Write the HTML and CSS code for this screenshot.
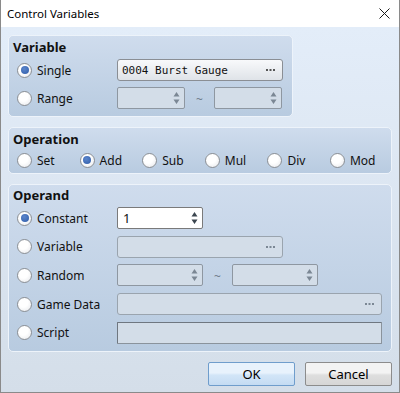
FILE: index.html
```html
<!DOCTYPE html>
<html lang="en">
<head>
  <meta charset="UTF-8">
  <title>Control Variables</title>
  <link rel="stylesheet" href="styles.css">
</head>
<body>
  <div class="window">
    <div class="titlebar">
      <span class="title">Control Variables</span>
      <svg class="close" width="11" height="11" viewBox="0 0 11 11"><path d="M0.5 0.5L10.5 10.5M10.5 0.5L0.5 10.5" stroke="#1a1a1a" stroke-width="1"/></svg>
    </div>

    <div class="content">
      <div class="group group-variable">
        <div class="group-title">Variable</div>
        <div class="rows">
          <label class="radio checked"><span class="dot"></span>Single</label>
          <div class="combo"><span class="mono">0004 Burst Gauge</span><svg class="more" width="9" height="2" viewBox="0 0 9 2"><path d="M0 0h2v2H0zM3.5 0h2v2h-2zM7 0h2v2H7z" fill="#555"/></svg></div>

          <label class="radio"><span class="dot"></span>Range</label>
          <div class="pair pair-range">
            <div class="spin disabled"><span class="arrows"><svg width="7" height="14" viewBox="0 0 7 14"><path d="M3.5 1L6.5 5.5H0.5Z M0.5 8.5H6.5L3.5 13Z" fill="#7b8794"/></svg></span></div>
            <span class="tilde">~</span>
            <div class="spin disabled"><span class="arrows"><svg width="7" height="14" viewBox="0 0 7 14"><path d="M3.5 1L6.5 5.5H0.5Z M0.5 8.5H6.5L3.5 13Z" fill="#7b8794"/></svg></span></div>
          </div>
        </div>
      </div>

      <div class="group group-operation">
        <div class="group-title">Operation</div>
        <div class="ops">
          <label class="radio"><span class="dot"></span>Set</label>
          <label class="radio checked"><span class="dot"></span>Add</label>
          <label class="radio"><span class="dot"></span>Sub</label>
          <label class="radio"><span class="dot"></span>Mul</label>
          <label class="radio"><span class="dot"></span>Div</label>
          <label class="radio"><span class="dot"></span>Mod</label>
        </div>
      </div>

      <div class="group group-operand">
        <div class="group-title">Operand</div>
        <div class="rows rows-operand">
          <label class="radio checked"><span class="dot"></span>Constant</label>
          <div class="spin active"><span class="value">1</span><span class="arrows"><svg width="7" height="14" viewBox="0 0 7 14"><path d="M3.5 1L6.5 5.5H0.5Z M0.5 8.5H6.5L3.5 13Z" fill="#3c4650"/></svg></span></div>

          <label class="radio"><span class="dot"></span>Variable</label>
          <div class="field short"><svg class="more" width="9" height="2" viewBox="0 0 9 2"><path d="M0 0h2v2H0zM3.5 0h2v2h-2zM7 0h2v2H7z" fill="#7b8794"/></svg></div>

          <label class="radio"><span class="dot"></span>Random</label>
          <div class="pair pair-random">
            <div class="spin disabled"><span class="arrows"><svg width="7" height="14" viewBox="0 0 7 14"><path d="M3.5 1L6.5 5.5H0.5Z M0.5 8.5H6.5L3.5 13Z" fill="#7b8794"/></svg></span></div>
            <span class="tilde">~</span>
            <div class="spin disabled"><span class="arrows"><svg width="7" height="14" viewBox="0 0 7 14"><path d="M3.5 1L6.5 5.5H0.5Z M0.5 8.5H6.5L3.5 13Z" fill="#7b8794"/></svg></span></div>
          </div>

          <label class="radio"><span class="dot"></span>Game Data</label>
          <div class="field wide"><svg class="more" width="9" height="2" viewBox="0 0 9 2"><path d="M0 0h2v2H0zM3.5 0h2v2h-2zM7 0h2v2H7z" fill="#7b8794"/></svg></div>

          <label class="radio"><span class="dot"></span>Script</label>
          <div class="field wide script"></div>
        </div>
      </div>

      <div class="buttons">
        <button class="btn btn-default">OK</button>
        <button class="btn">Cancel</button>
      </div>
    </div>
  </div>
</body>
</html>
```

FILE: styles.css
```css
body {
  margin: 0;
  font-family: "Noto Sans", "Open Sans", sans-serif;
  font-size: 12px;
  color: #111;
  background: #fff;
}
.window {
  width: 400px;
  height: 393px;
  box-sizing: border-box;
  border: 1px solid #8a8a8a;
  border-top: none;
  display: flex;
  flex-direction: column;
}
.titlebar {
  height: 27px;
  background: #fff;
  display: flex;
  align-items: center;
  justify-content: space-between;
  padding: 0 9px 0 6px;
}
.title {
  font-size: 11.5px;
  color: #000;
}
.content {
  flex: 1;
  background: linear-gradient(#e3edf9, #d4dee9);
  padding: 8px 7px 0 7px;
  display: flex;
  flex-direction: column;
  gap: 10px;
}
.group {
  border: 1px solid #edf3fa;
  border-radius: 5px;
  background: linear-gradient(#cfdced, #b8cbe0);
  padding: 1px 8px 7px 8px;
}
.group-variable {
  width: 285px;
  box-sizing: border-box;
}
.group-title {
  height: 20px;
  line-height: 20px;
  font-weight: bold;
  font-size: 13px;
  margin-left: -4px;
  margin-bottom: 2px;
}
.group-operation {
  padding-bottom: 4px;
}
.group-operand .group-title {
  margin-top: -1px;
}
.rows {
  display: grid;
  grid-template-columns: 100px auto;
  grid-auto-rows: 22px;
  row-gap: 6px;
  align-items: center;
  justify-items: start;
}
.rows-operand {
  row-gap: 6.7px;
}
.radio {
  display: flex;
  align-items: center;
  gap: 5px;
  height: 18px;
}
.dot {
  width: 13px;
  height: 13px;
  border: 1px solid #8b8f94;
  border-radius: 50%;
  background: radial-gradient(circle at 40% 35%, #ffffff 40%, #e4e6ea);
  display: flex;
  align-items: center;
  justify-content: center;
}
.checked .dot::after {
  content: "";
  width: 8px;
  height: 8px;
  border-radius: 50%;
  background: radial-gradient(circle at 40% 35%, #5b86cc, #2f5ca8);
}
.ops {
  display: grid;
  grid-template-columns: repeat(6, 62.6px);
}
.combo {
  width: 166px;
  height: 22px;
  box-sizing: border-box;
  border: 1px solid #8a8e94;
  border-radius: 3px;
  background: linear-gradient(#f8f9fb, #dfe3e8);
  display: flex;
  align-items: center;
  justify-content: space-between;
  padding: 0 7px 0 4px;
}
.mono {
  font-family: "DejaVu Sans Mono", "Liberation Mono", monospace;
  font-size: 11px;
  color: #111;
}
.pair {
  display: flex;
  align-items: center;
}
.pair-range .spin {
  width: 68px;
}
.pair-range .tilde {
  width: 29px;
}
.pair-random .spin {
  width: 86px;
}
.pair-random .tilde {
  width: 29px;
}
.tilde {
  text-align: center;
  color: #6f7c8a;
  font-size: 12px;
  padding-top: 2px;
}
.spin {
  height: 22px;
  box-sizing: border-box;
  border: 1px solid #8e97a1;
  border-radius: 2px;
  display: flex;
  align-items: center;
  justify-content: space-between;
  padding: 0 4px 0 5px;
}
.spin .arrows {
  margin-left: auto;
  display: flex;
}
.spin.disabled {
  background: #d3dde8;
}
.spin.active {
  width: 86px;
  background: #fff;
  border-color: #7a7a7a;
}
.value {
  font-size: 13px;
  color: #111;
}
.field {
  height: 22px;
  box-sizing: border-box;
  border: 1px solid #9aa4ae;
  border-radius: 3px;
  background: #d3dde8;
  display: flex;
  align-items: center;
  justify-content: flex-end;
  padding-right: 7px;
}
.field.short {
  width: 166px;
}
.field.wide {
  width: 265px;
}
.field.script {
  border-radius: 1px;
  border-color: #8a939c;
  border-top-color: #6f7780;
  border-left-color: #6f7780;
}
.buttons {
  display: flex;
  justify-content: flex-end;
  gap: 10px;
}
.btn {
  width: 87px;
  height: 24px;
  font-family: "Noto Sans", "Open Sans", sans-serif;
  font-size: 13px;
  color: #000;
  border: 1px solid #8c8c8c;
  border-radius: 2px;
  background: linear-gradient(#f3f3f3 45%, #dedede 55%, #d6d6d6);
}
.btn-default {
  border-color: #6f9dcc;
  background: linear-gradient(#e8f2fc 45%, #d2e5f7 55%, #c4dbf2);
}
```
